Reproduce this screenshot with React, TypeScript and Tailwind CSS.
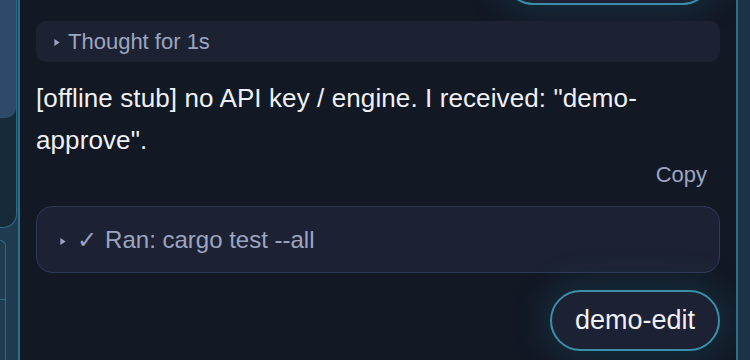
import React from 'react';

const Caret = ({ className = '' }: { className?: string }) => (
  <svg viewBox="0 0 6 8" className={className} fill="currentColor">
    <path d="M0 0 L6 4 L0 8 Z" />
  </svg>
);

function LeftRail() {
  return (
    <div className="w-[20px] shrink-0 flex flex-col bg-[#1e3b4f] border-r-2 border-[#2f6f88]">
      <div className="h-[228px] w-[17px] bg-[#172a3a] border-r border-b border-[#2f6c85] rounded-br-[14px] overflow-hidden">
        <div className="h-[118px] bg-[#2e4a68] rounded-br-[10px]" />
      </div>
      <div className="mt-[12px] flex-1 w-[6px] border-t border-r border-[#2f6c85] rounded-tr-[8px] flex flex-col">
        <div className="h-[58px]" />
        <div className="border-t border-[#2f6c85]" />
      </div>
    </div>
  );
}

export default function App() {
  return (
    <div className="w-[750px] h-[360px] flex overflow-hidden bg-[#121824] font-['Liberation_Sans',Arial,sans-serif]">
      <LeftRail />

      <div className="flex-1 flex flex-col pl-[16px] pr-[16px]">
        {/* previous user message, scrolled mostly out of view */}
        <div className="flex justify-end mt-[-56px] mr-[7px]">
          <div className="h-[61px] w-[210px] rounded-full border-2 border-[#3b8ea9] bg-[#1c2233] shadow-[0_0_34px_6px_rgba(40,120,150,0.24)]" />
        </div>

        <div className="mt-[16px] h-[41px] rounded-[10px] bg-[#1d2233] flex items-center pl-[18px] text-[22px] text-[#9ca5c0]">
          <Caret className="w-[6px] h-[7px] mr-[8px] mt-[2px]" />
          <span>Thought for 1s</span>
        </div>

        <p className="mt-[15px] text-[26px] leading-[42px] tracking-[0.1px] text-[#eef0f4]">
          [offline stub] no API key / engine. I received: "demo-approve".
        </p>

        <div className="flex justify-end mr-[13px]">
          <span className="text-[22px] leading-[28px] text-[#9ca5c0]">Copy</span>
        </div>

        <div className="mt-[17px] h-[67px] rounded-[16px] border-[1.5px] border-[#2e3956] bg-[#1c2233] flex items-center pl-[23px] text-[24px] text-[#9ca5c0]">
          <Caret className="w-[6px] h-[7px] mr-[11px] mt-[3px]" />
          <span className="font-['DejaVu_Sans',sans-serif] text-[24px] mr-[8px]">✓</span>
          <span>Ran: cargo test --all</span>
        </div>

        <div className="flex justify-end mt-[17px]">
          <div className="h-[61px] px-[23px] flex items-center rounded-full border-2 border-[#3b8ea9] bg-[#1c2233] text-[27px] text-[#eef0f4] shadow-[0_0_34px_6px_rgba(40,120,150,0.24)]">
            demo-edit
          </div>
        </div>
      </div>

      <div className="w-[14px] shrink-0 bg-[#1b3347] border-l-2 border-[#2c6d88]" />
    </div>
  );
}
